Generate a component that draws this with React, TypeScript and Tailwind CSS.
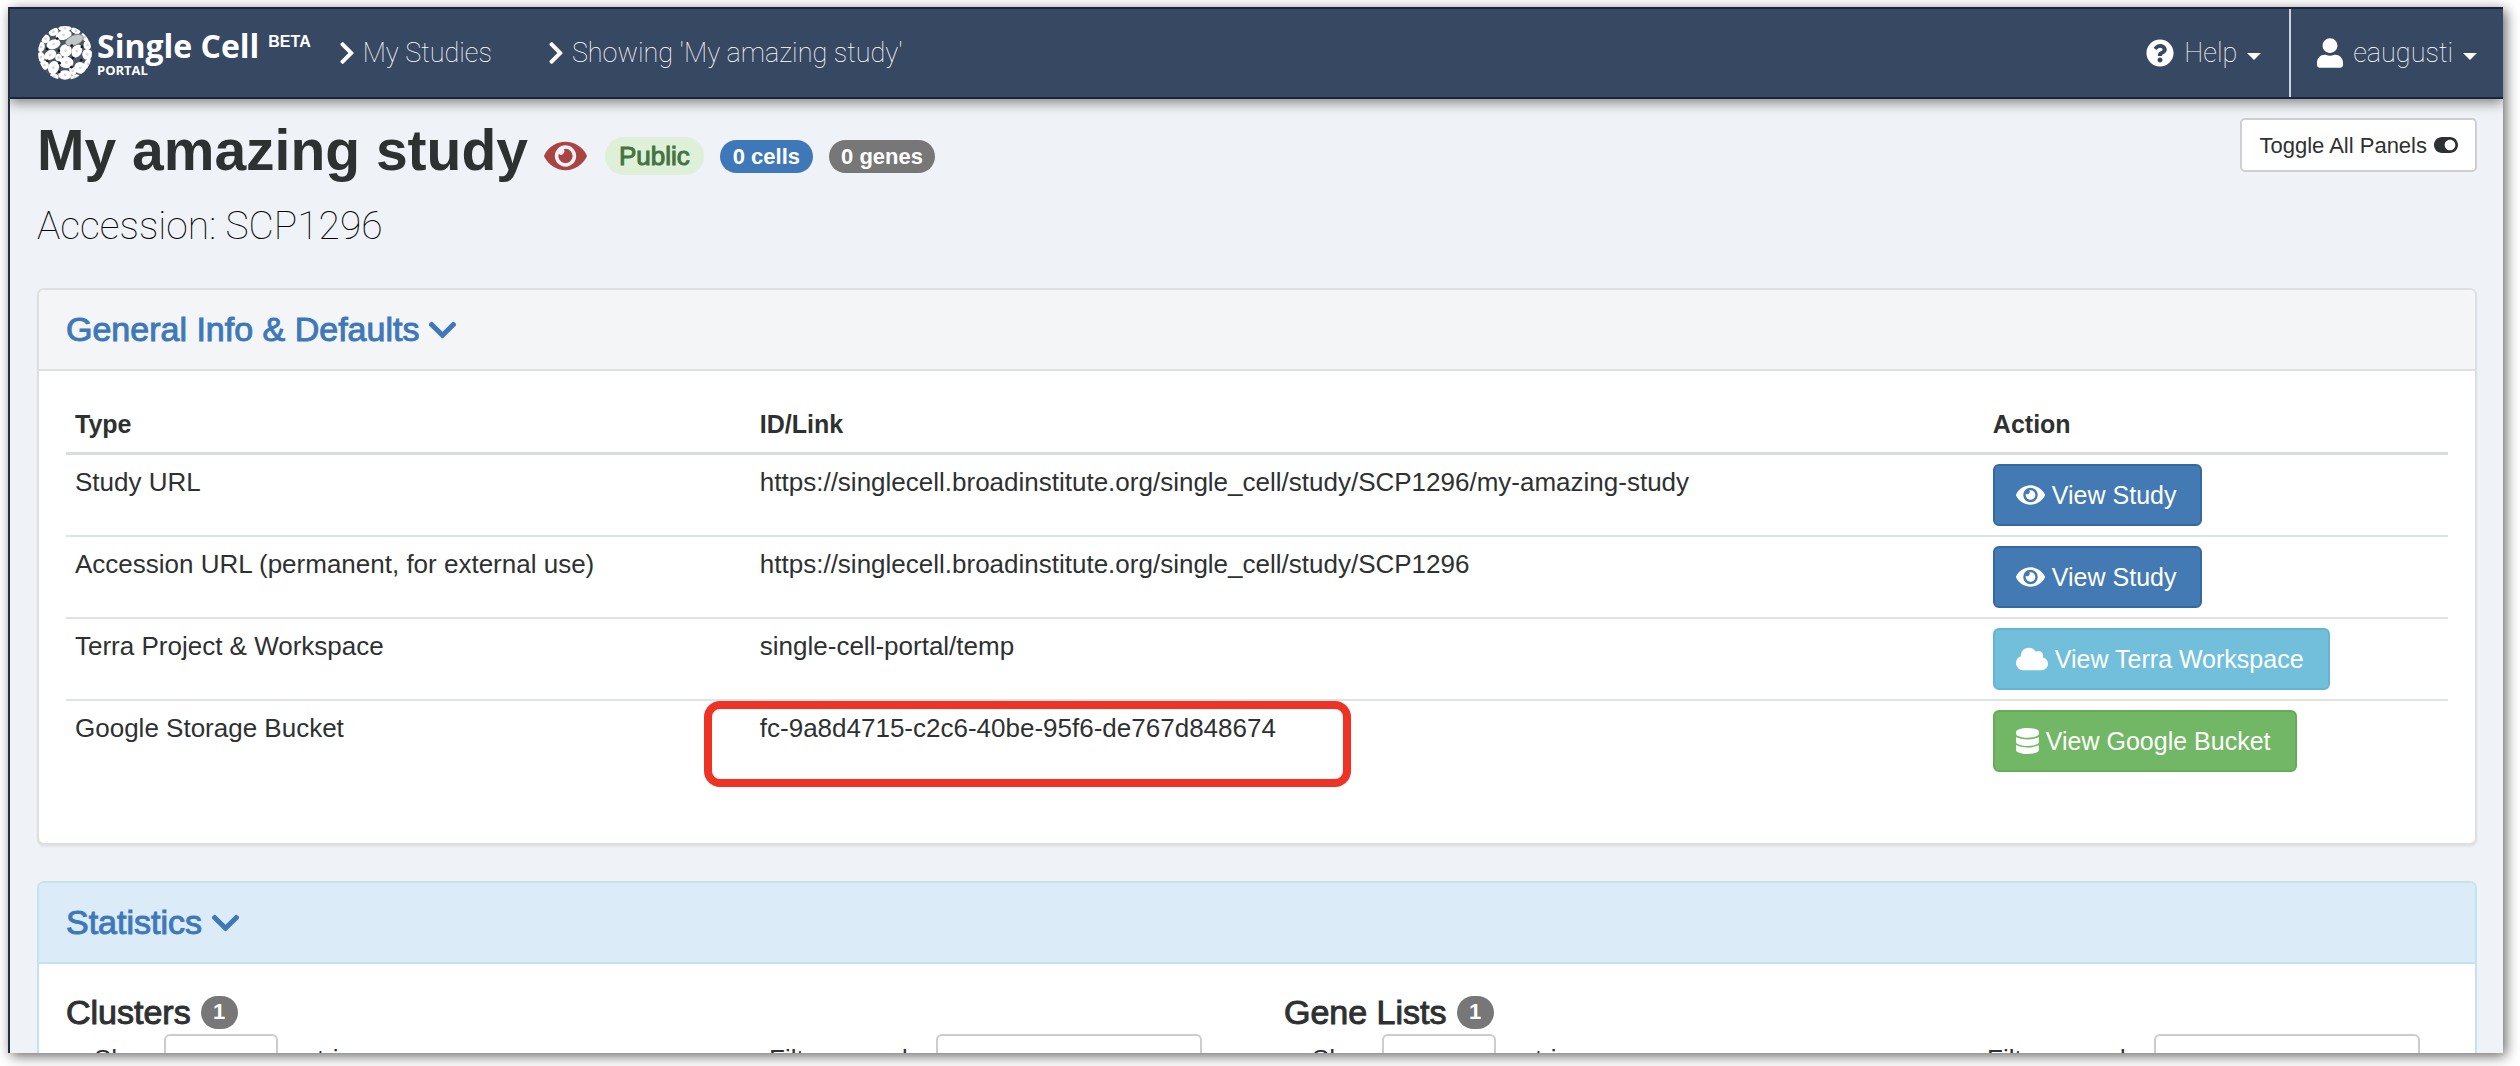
import type { ReactNode } from "react";
import {
  FaChevronDown,
  FaChevronRight,
  FaCloud,
  FaDatabase,
  FaEye,
  FaQuestionCircle,
  FaToggleOn,
  FaUser,
} from "react-icons/fa";

/* Cells of the logo: centre x, centre y, radius x, radius y, rotation. */
const cells: [number, number, number, number, number][] = [
  [80, 7, 17, 7, 0],
  [46, 17, 13, 10, -30],
  [76, 27, 22, 12, -12],
  [22, 38, 11, 11, -40],
  [46, 54, 19, 12, -18],
  [9, 62, 9, 13, 10],
  [112, 14, 12, 7, 20],
  [140, 32, 8, 12, -30],
  [82, 73, 16, 17, 10],
  [115, 74, 13, 18, 25],
  [147, 56, 10, 12, 10],
  [146, 84, 13, 14, 0],
  [36, 86, 17, 12, -30],
  [9, 92, 9, 13, -10],
  [61, 93, 8, 9, 0],
  [84, 108, 19, 15, 0],
  [19, 116, 11, 12, -30],
  [46, 123, 14, 18, 20],
  [125, 124, 16, 15, 20],
  [148, 112, 9, 13, 20],
  [80, 145, 18, 12, 0],
  [103, 133, 7, 11, -30],
  [110, 153, 12, 7, -20],
  [48, 150, 11, 8, 20],
];

function Logo() {
  return (
    <svg viewBox="0 0 160 160" className="size-[54px] shrink-0" aria-hidden="true">
      <clipPath id="logo-disc">
        <circle cx="80" cy="80" r="80" />
      </clipPath>
      <g clipPath="url(#logo-disc)">
        <rect width="160" height="160" fill="#4a5468" />
        {cells.map(([x, y, rx, ry, a]) => (
          <g key={`${x}-${y}`} transform={`rotate(${a} ${x} ${y})`}>
            <ellipse cx={x} cy={y} rx={rx + 2} ry={ry + 2} fill="#fff" />
            <ellipse cx={x} cy={y} rx="4" ry="4" fill="#d5d7dc" />
          </g>
        ))}
        <ellipse cx="108" cy="42" rx="28" ry="15" fill="#c3c6c9" stroke="#6b7280" strokeWidth="2" transform="rotate(-22 108 42)" />
        <g fill="#14181f">
          <circle cx="57" cy="37" r="4" />
          <circle cx="27" cy="68" r="4" />
          <circle cx="62" cy="73" r="4" />
          <circle cx="100" cy="58" r="4" />
          <circle cx="130" cy="62" r="4" />
          <circle cx="64" cy="110" r="4" />
          <circle cx="103" cy="95" r="4" />
          <circle cx="128" cy="101" r="4" />
          <circle cx="28" cy="103" r="4" />
          <circle cx="63" cy="136" r="4" />
          <circle cx="99" cy="122" r="4" />
        </g>
      </g>
    </svg>
  );
}

function Caret() {
  return (
    <svg viewBox="0 0 14 7" className="mt-[6px] h-[7px] w-[14px]" aria-hidden="true">
      <path d="M0 0h14L7 7z" fill="#fff" />
    </svg>
  );
}

function Navbar() {
  return (
    <nav className="relative z-10 flex h-[92px] shrink-0 items-stretch border-y-2 border-[#1b2438] bg-[#374862] pl-[28px] text-white shadow-[0_3px_12px_rgba(0,0,0,0.5)]">
      <a href="#home" className="flex items-center gap-[5px]">
        <Logo />
        <span className="flex items-start gap-[9px]">
          <span className="flex flex-col font-['Open_Sans'] font-bold">
            <span className="text-[32px] leading-[34px]">Single Cell</span>
            <span className="text-[13px] leading-[14px]">PORTAL</span>
          </span>
          <span className="text-[16px] leading-[26px] font-bold">BETA</span>
        </span>
      </a>
      <ul className="flex grow items-center font-['Roboto'] text-[27px] font-thin">
        <li className="ml-[28px]">
          <a href="#studies" className="flex items-center gap-[8px]">
            <FaChevronRight className="h-[26px] w-[16px]" />
            My Studies
          </a>
        </li>
        <li className="ml-[56px]">
          <a href="#study" className="flex items-center gap-[8px]">
            <FaChevronRight className="h-[26px] w-[16px]" />
            Showing 'My amazing study'
          </a>
        </li>
        <li className="ml-auto h-full">
          <button type="button" className="flex h-full items-center gap-[10px] border-r-2 border-[#cdd2dc] pr-[28px]">
            <FaQuestionCircle className="size-[28px]" />
            Help
            <Caret />
          </button>
        </li>
        <li className="h-full">
          <button type="button" className="flex h-full items-center gap-[10px] px-[26px]">
            <FaUser className="h-[30px] w-[26px]" />
            eaugusti
            <Caret />
          </button>
        </li>
      </ul>
    </nav>
  );
}

function Heading() {
  return (
    <header className="flex items-start justify-between">
      <div>
        <div className="flex items-center pt-[17px]">
          <h1 className="text-[57px] leading-[68px] font-bold">My amazing study</h1>
          <div className="flex items-center pt-[12px]">
            <FaEye className="ml-[16px] h-[38px] w-[43px] text-[#a94442]" />
            <span className="ml-[18px] flex h-[38px] items-center rounded-full bg-[#dff0d8] px-[14px] text-[26px] text-[#44743f] [-webkit-text-stroke:1px_#44743f]">
              Public
            </span>
            <span className="ml-[16px] flex h-[33px] items-center rounded-full bg-[#3f78b8] px-[13px] text-[22px] font-bold text-white">
              0 cells
            </span>
            <span className="ml-[16px] flex h-[33px] items-center rounded-full bg-[#777] px-[12px] text-[22px] font-bold text-white">
              0 genes
            </span>
          </div>
        </div>
        <p className="mt-[18px] font-['Roboto'] text-[39px] leading-[48px] font-thin text-black">Accession: SCP1296</p>
      </div>
      <button type="button" className="mt-[19px] flex h-[54px] items-center gap-[7px] rounded-[5px] border-2 border-[#cdcfd3] bg-white px-[17px] text-[22px]">
        Toggle All Panels
        <FaToggleOn className="h-[22px] w-[24px]" />
      </button>
    </header>
  );
}

function PanelTitle({ children }: { children: ReactNode }) {
  return (
    <h2 className="px-[27px] text-[34px] leading-[79px] text-[#3f78b8] [-webkit-text-stroke:1px_#3f78b8]">
      <a href="#toggle" className="inline-flex items-center gap-[9px]">
        {children}
        <FaChevronDown className="h-[32px] w-[29px]" />
      </a>
    </h2>
  );
}

const buttonBase = "flex h-[62px] w-fit items-center rounded-[6px] border-2 pr-[24px] pl-[21px] text-[25px] text-white";
const blue = "border-[#33699f] bg-[#437ab3]";

const rows = [
  {
    type: "Study URL",
    id: "https://singlecell.broadinstitute.org/single_cell/study/SCP1296/my-amazing-study",
    tone: blue,
    icon: <FaEye className="h-[26px] w-[29px]" />,
    action: "View Study",
  },
  {
    type: "Accession URL (permanent, for external use)",
    id: "https://singlecell.broadinstitute.org/single_cell/study/SCP1296",
    tone: blue,
    icon: <FaEye className="h-[26px] w-[29px]" />,
    action: "View Study",
  },
  {
    type: "Terra Project & Workspace",
    id: "single-cell-portal/temp",
    tone: "border-[#62b5d3] bg-[#72bfdb]",
    icon: <FaCloud className="h-[26px] w-[32px]" />,
    action: "View Terra Workspace",
  },
  {
    type: "Google Storage Bucket",
    id: "fc-9a8d4715-c2c6-40be-95f6-de767d848674",
    tone: "border-[#62ad58] bg-[#72b765]",
    icon: <FaDatabase className="h-[26px] w-[23px]" />,
    action: "View Google Bucket",
    marked: true,
  },
];

function GeneralInfo() {
  return (
    <section className="mt-[38px] rounded-[7px] border-2 border-[#dddfe0] bg-white shadow-[0_2px_2px_rgba(0,0,0,0.06)]">
      <div className="rounded-t-[5px] border-b-2 border-[#dddfe0] bg-[#f4f5f7]">
        <PanelTitle>General Info &amp; Defaults</PanelTitle>
      </div>
      <div className="px-[27px] pt-[26px] pb-[62px]">
        <table className="w-full table-fixed border-separate border-spacing-0 text-[26px] leading-[37px]">
          <thead>
            <tr className="text-left text-[25px]">
              <th className="w-23/80 border-b-3 border-[#dadddd] p-[9px]">Type</th>
              <th className="w-44/85 border-b-3 border-[#dadddd] p-[9px]">ID/Link</th>
              <th className="border-b-3 border-[#dadddd] p-[9px]">Action</th>
            </tr>
          </thead>
          <tbody className="[&>tr+tr>td]:border-t-2 [&>tr+tr>td]:border-[#e0e3e6]">
            {rows.map((row) => (
              <tr key={row.type} className="align-top">
                <td className="p-[9px]">{row.type}</td>
                <td className="relative p-[9px]">
                  {row.id}
                  {row.marked && (
                    <span className="absolute top-0 -left-[47px] h-[86px] w-[647px] rounded-[16px] border-8 border-[#ee3224]" />
                  )}
                </td>
                <td className="p-[9px]">
                  <button type="button" className={`${buttonBase} gap-[7px] ${row.tone}`}>
                    {row.icon}
                    {row.action}
                  </button>
                </td>
              </tr>
            ))}
          </tbody>
        </table>
      </div>
    </section>
  );
}

function StatList({ title, name }: { title: string; name: string }) {
  return (
    <div className="px-[27px]">
      <h3 className="flex items-center gap-[10px] text-[34px] leading-[38px] [-webkit-text-stroke:1px_#2e3131]">
        {title}
        <span className="flex h-[33px] w-[37px] items-center justify-center rounded-full bg-[#777] text-[22px] font-bold text-white [-webkit-text-stroke:0px]">
          1
        </span>
      </h3>
      <div className="mt-[3px] flex items-center justify-between px-[28px] text-[26px]">
        <label htmlFor={`${name}-length`} className="flex items-center gap-[5px]">
          Show
          <select id={`${name}-length`} className="h-[50px] w-[114px] rounded-[6px] border-2 border-[#ccc] bg-white px-3 pt-[8px] text-[18px]">
            <option>5</option>
          </select>
          <span className="ml-[5px]">entries</span>
        </label>
        <label htmlFor={`${name}-filter`} className="flex items-center gap-[8px]">
          Filter records:
          <input id={`${name}-filter`} className="h-[50px] w-[266px] rounded-[6px] border-2 border-[#ccc] bg-white px-3" />
        </label>
      </div>
    </div>
  );
}

function Statistics() {
  return (
    <section className="mt-[36px] rounded-[7px] border-2 border-[#c3e4ee] bg-white">
      <div className="rounded-t-[5px] border-b-2 border-[#c3e4ee] bg-[#dbebf8]">
        <PanelTitle>Statistics</PanelTitle>
      </div>
      <div className="grid grid-cols-2 pt-[29px] pb-[27px]">
        <StatList title="Clusters" name="clusters" />
        <StatList title="Gene Lists" name="gene-lists" />
      </div>
    </section>
  );
}

export default function App() {
  return (
    <div className="h-screen overflow-hidden bg-white pt-[7px] pr-[17px] pb-[13px] pl-[8px] font-['Liberation_Sans',Arial,sans-serif] text-[#2e3131]">
      <div className="flex h-full flex-col overflow-hidden border-l-2 border-[#222d3d] bg-[#eff2f6] shadow-[3px_3px_12px_rgba(0,0,0,0.6)]">
        <Navbar />
        <main className="pr-[26px] pl-[27px]">
          <Heading />
          <GeneralInfo />
          <Statistics />
        </main>
      </div>
    </div>
  );
}
